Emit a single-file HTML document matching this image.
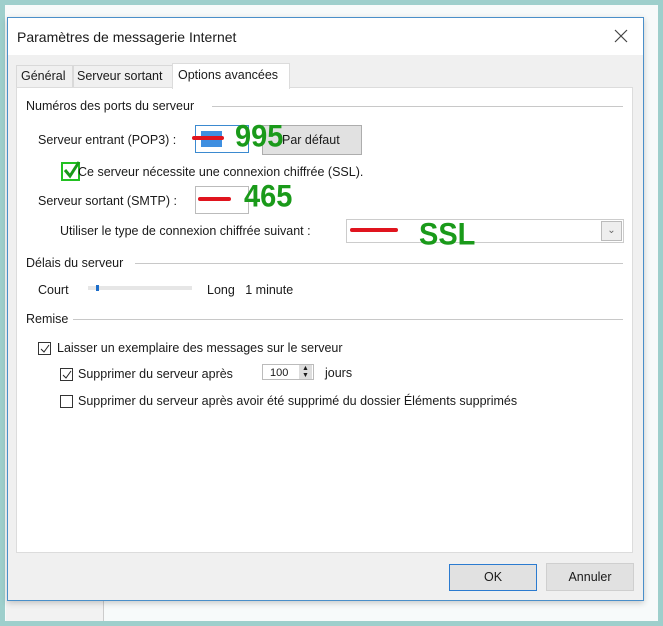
<!DOCTYPE html>
<html><head><meta charset="utf-8"><style>
*{margin:0;padding:0;box-sizing:border-box}
body{width:663px;height:626px;background:#9ecfcc;position:relative;overflow:hidden;font-family:"Liberation Sans",sans-serif;font-size:12.5px;color:#1a1a1a}
.a{position:absolute;white-space:nowrap}
.cb{position:absolute;width:13px;height:13px;border:1px solid #333;background:#fff}
.line{position:absolute;height:1px;background:#c8c8c8}
.g{position:absolute;color:#1a9a1a;font-weight:bold;font-size:29px;font-family:"Liberation Sans",sans-serif;transform:scaleY(1.08)}
.red{position:absolute;height:4px;background:#e0141e;border-radius:2px}
</style></head><body>
<div class="a" style="left:5px;top:5px;width:653px;height:616px;background:#f7fafa"></div>
<div class="a" style="left:6px;top:600px;width:98px;height:21px;background:#f2f2f2;border-right:1px solid #ccc"></div>
<div class="a" style="left:7px;top:17px;width:637px;height:584px;background:#f0f0f0;border:1px solid #4a8fc9;box-shadow:0 2px 6px rgba(0,0,0,.2)"></div>
<div class="a" style="left:8px;top:18px;width:635px;height:37px;background:#fff"></div>
<div class="a" style="left:17px;top:29px;font-size:14px">Paramètres de messagerie Internet</div>
<svg class="a" style="left:614px;top:29px" width="14" height="14"><path d="M1 1L13 13M13 1L1 13" stroke="#444" stroke-width="1.2"/></svg>
<!-- tabs -->
<div class="a" style="left:16px;top:65px;width:57px;height:22px;border:1px solid #d9d9d9;border-bottom:none;background:#f0f0f0"></div>
<div class="a" style="left:21px;top:69px">Général</div>
<div class="a" style="left:73px;top:65px;width:100px;height:22px;border:1px solid #d9d9d9;border-bottom:none;background:#f0f0f0"></div>
<div class="a" style="left:77px;top:69px">Serveur sortant</div>
<div class="a" style="left:16px;top:87px;width:617px;height:466px;background:#fff;border:1px solid #dcdcdc"></div>
<div class="a" style="left:172px;top:63px;width:118px;height:26px;background:#fff;border:1px solid #dcdcdc;border-bottom:none"></div>
<div class="a" style="left:178px;top:68px">Options avancées</div>
<!-- section 1 -->
<div class="a" style="left:26px;top:99px">Numéros des ports du serveur</div>
<div class="line" style="left:212px;top:106px;width:411px"></div>
<div class="a" style="left:38px;top:133px">Serveur entrant (POP3) :</div>
<div class="a" style="left:195px;top:125px;width:54px;height:28px;border:1px solid #3b8ad0;background:#fff"></div>
<div class="a" style="left:201px;top:131px;width:21px;height:16px;background:#3f8fe0"></div>
<div class="red" style="left:192px;top:136px;width:32px"></div>
<div class="a" style="left:262px;top:125px;width:100px;height:30px;background:#e1e1e1;border:1px solid #adadad"></div>
<div class="a" style="left:282px;top:133px">Par défaut</div>
<div class="g" style="left:235px;top:121px">995</div>
<div class="cb" style="left:61px;top:162px;border-color:#22c122;border-width:2px;width:19px;height:19px;background:transparent"></div>
<svg class="a" style="left:62px;top:160px" width="20" height="20"><path d="M3 10L8 16L17 2" stroke="#1a9a1a" stroke-width="3" fill="none"/></svg>
<div class="a" style="left:78px;top:165px">Ce serveur nécessite une connexion chiffrée (SSL).</div>
<div class="a" style="left:38px;top:194px">Serveur sortant (SMTP) :</div>
<div class="a" style="left:195px;top:186px;width:54px;height:28px;border:1px solid #bbb;background:#fff"></div>
<div class="red" style="left:198px;top:197px;width:33px"></div>
<div class="g" style="left:244px;top:181px">465</div>
<div class="a" style="left:60px;top:224px">Utiliser le type de connexion chiffrée suivant :</div>
<div class="a" style="left:346px;top:219px;width:278px;height:24px;border:1px solid #ccc;background:#fff"></div>
<div class="a" style="left:601px;top:221px;width:21px;height:20px;border:1px solid #bbb;background:#eee;font-size:10px;color:#666;text-align:center;line-height:18px">⌄</div>
<div class="red" style="left:350px;top:228px;width:48px"></div>
<div class="g" style="left:419px;top:219px">SSL</div>
<!-- section 2 -->
<div class="a" style="left:26px;top:256px">Délais du serveur</div>
<div class="line" style="left:135px;top:263px;width:488px"></div>
<div class="a" style="left:38px;top:283px">Court</div>
<div class="a" style="left:88px;top:286px;width:104px;height:4px;background:#e6e6e6"></div>
<div class="a" style="left:96px;top:285px;width:3px;height:6px;background:#1c6dc9"></div>
<div class="a" style="left:207px;top:283px">Long&nbsp;&nbsp;&nbsp;1 minute</div>
<!-- section 3 -->
<div class="a" style="left:26px;top:312px">Remise</div>
<div class="line" style="left:73px;top:319px;width:550px"></div>
<div class="cb" style="left:38px;top:342px"></div>
<svg class="a" style="left:39px;top:343px" width="12" height="12"><path d="M2 6L5 9L10 2" stroke="#222" stroke-width="1" fill="none"/></svg>
<div class="a" style="left:57px;top:341px">Laisser un exemplaire des messages sur le serveur</div>
<div class="cb" style="left:60px;top:368px"></div>
<svg class="a" style="left:61px;top:369px" width="12" height="12"><path d="M2 6L5 9L10 2" stroke="#222" stroke-width="1" fill="none"/></svg>
<div class="a" style="left:78px;top:367px">Supprimer du serveur après</div>
<div class="a" style="left:262px;top:364px;width:52px;height:16px;border:1px solid #bbb;background:#fff;font-size:11px;padding-left:7px;line-height:16px">100</div>
<div class="a" style="left:299px;top:365px;width:13px;height:14px;background:#ddd;font-size:7px;line-height:7px;text-align:center">▲<br>▼</div>
<div class="a" style="left:325px;top:366px">jours</div>
<div class="cb" style="left:60px;top:395px"></div>
<div class="a" style="left:78px;top:394px">Supprimer du serveur après avoir été supprimé du dossier Éléments supprimés</div>
<!-- buttons -->
<div class="a" style="left:449px;top:564px;width:88px;height:27px;background:#e1e1e1;border:1px solid #2b7bd0;text-align:center;line-height:25px">OK</div>
<div class="a" style="left:546px;top:563px;width:88px;height:28px;background:#e1e1e1;border:1px solid #cfcfcf;text-align:center;line-height:26px">Annuler</div>
</body></html>
